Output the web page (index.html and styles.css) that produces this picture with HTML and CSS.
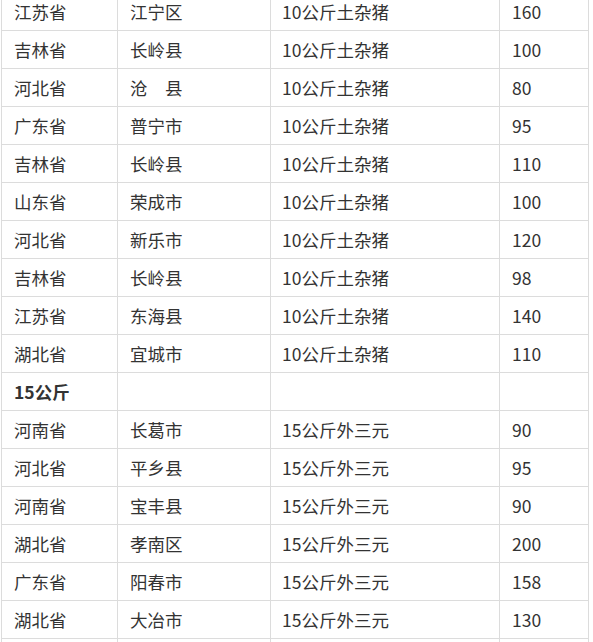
FILE: index.html
```html
<!DOCTYPE html>
<html lang="zh">
<head>
<meta charset="utf-8">
<link rel="stylesheet" href="styles.css">
</head>
<body>
<table class="price-table">
  <colgroup>
    <col class="c1"><col class="c2"><col class="c3"><col class="c4">
  </colgroup>
  <tbody>
    <tr><td>江苏省</td><td>江宁区</td><td>10公斤土杂猪</td><td>160</td></tr>
    <tr><td>吉林省</td><td>长岭县</td><td>10公斤土杂猪</td><td>100</td></tr>
    <tr><td>河北省</td><td>沧　县</td><td>10公斤土杂猪</td><td>80</td></tr>
    <tr><td>广东省</td><td>普宁市</td><td>10公斤土杂猪</td><td>95</td></tr>
    <tr><td>吉林省</td><td>长岭县</td><td>10公斤土杂猪</td><td>110</td></tr>
    <tr><td>山东省</td><td>荣成市</td><td>10公斤土杂猪</td><td>100</td></tr>
    <tr><td>河北省</td><td>新乐市</td><td>10公斤土杂猪</td><td>120</td></tr>
    <tr><td>吉林省</td><td>长岭县</td><td>10公斤土杂猪</td><td>98</td></tr>
    <tr><td>江苏省</td><td>东海县</td><td>10公斤土杂猪</td><td>140</td></tr>
    <tr><td>湖北省</td><td>宜城市</td><td>10公斤土杂猪</td><td>110</td></tr>
    <tr><td class="group">15公斤</td><td></td><td></td><td></td></tr>
    <tr><td>河南省</td><td>长葛市</td><td>15公斤外三元</td><td>90</td></tr>
    <tr><td>河北省</td><td>平乡县</td><td>15公斤外三元</td><td>95</td></tr>
    <tr><td>河南省</td><td>宝丰县</td><td>15公斤外三元</td><td>90</td></tr>
    <tr><td>湖北省</td><td>孝南区</td><td>15公斤外三元</td><td>200</td></tr>
    <tr><td>广东省</td><td>阳春市</td><td>15公斤外三元</td><td>158</td></tr>
    <tr><td>湖北省</td><td>大冶市</td><td>15公斤外三元</td><td>130</td></tr>
    <tr><td></td><td></td><td></td><td></td></tr>
  </tbody>
</table>
</body>
</html>
```
FILE: styles.css
```css
html, body {
  margin: 0;
  padding: 0;
  background: #fff;
  overflow: hidden;
}
body {
  padding-left: 1px;
  font-family: "Noto Sans CJK SC", "Microsoft YaHei", sans-serif;
  font-size: 17.5px;
  color: #333;
}
.price-table {
  border-collapse: collapse;
  table-layout: fixed;
  width: 587px;
  margin-top: -8px;
}
.c1 { width: 116px; }
.c2 { width: 153px; }
.c3 { width: 229px; }
.c4 { width: 89px; }
.price-table td {
  border: 1px solid #dcdcdc;
  height: 38px;
  padding: 0 0 0 12px;
  box-sizing: border-box;
  vertical-align: middle;
  line-height: 20px;
  white-space: nowrap;
}
.price-table td:nth-child(3) { padding-left: 11px; }
.price-table td.group {
  font-weight: bold;
}
```
